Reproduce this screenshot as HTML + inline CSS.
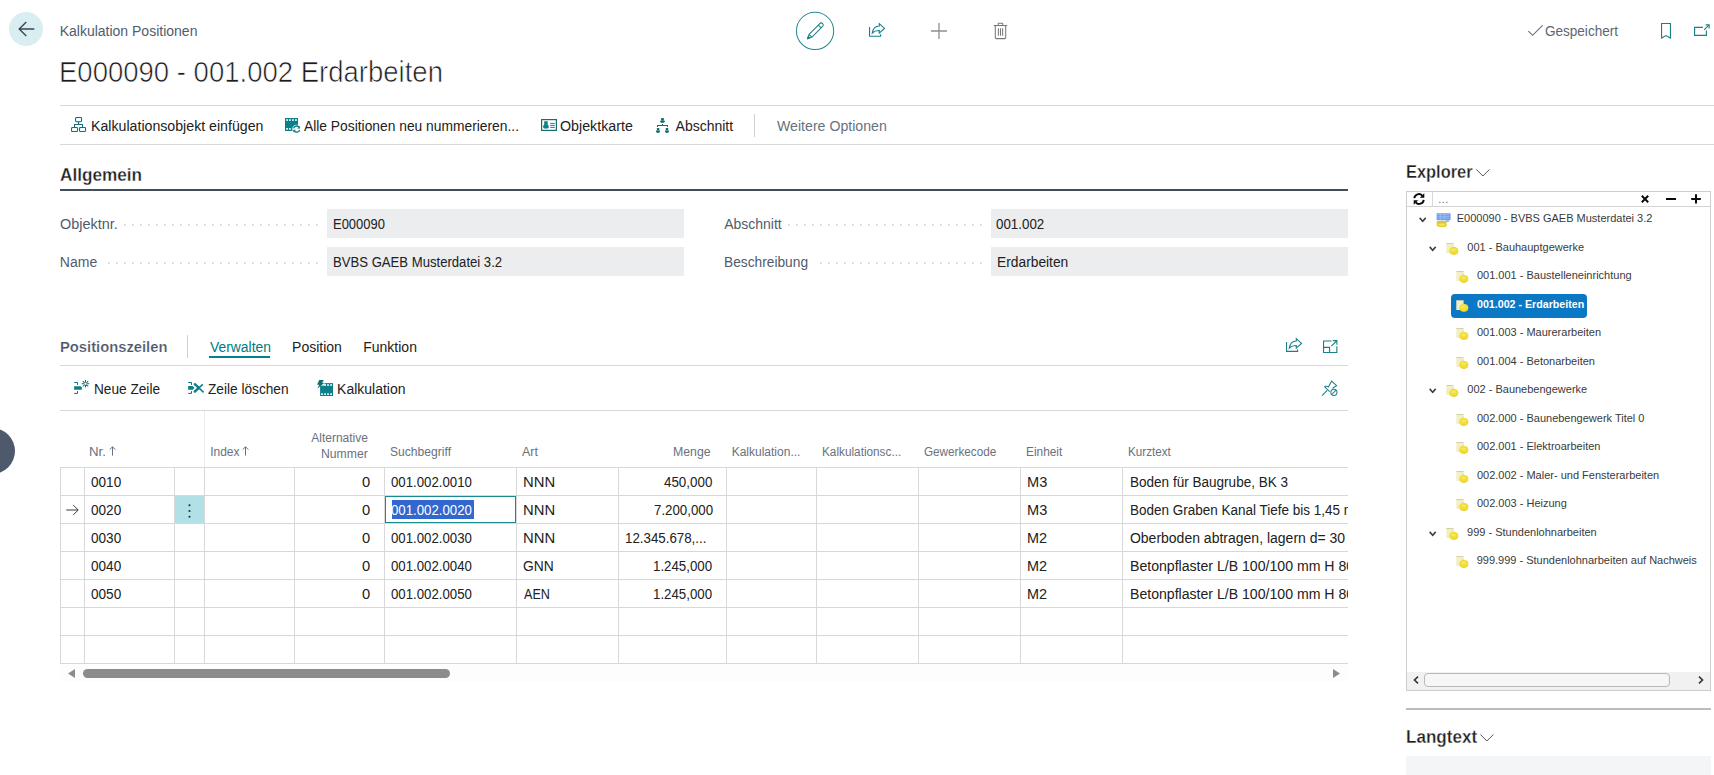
<!DOCTYPE html>
<html lang="de">
<head>
<meta charset="utf-8">
<title>Kalkulation Positionen - E000090 - 001.002 Erdarbeiten</title>
<style>
html,body{margin:0;padding:0;background:#fff;}
body{width:1714px;height:775px;position:relative;overflow:hidden;font-family:"Liberation Sans",sans-serif;}
.t{position:absolute;white-space:pre;transform-origin:0 50%;font-family:"Liberation Sans",sans-serif;}
.a{position:absolute;}
.hl{position:absolute;height:1px;background:#d6d8db;}
.vl{position:absolute;width:1px;background:#d9d9d9;}
.fld{position:absolute;height:28.7px;background:#ebedee;}
.dots{position:absolute;height:2px;background-image:radial-gradient(circle at 1px 1px,#d3d5d8 0.55px,rgba(211,213,216,0) 1.2px);background-size:8px 2px;background-repeat:repeat-x;}
svg{position:absolute;overflow:visible;}
</style>
</head>
<body>

<!-- ===== header ===== -->
<div class="a" style="left:9.1px;top:11.9px;width:34.1px;height:34.1px;border-radius:50%;background:#d8eef0;"></div>
<svg style="left:17.5px;top:21px" width="17" height="16" viewBox="0 0 17 16"><path d="M16.3 8H1.2M8.3 1.1L1.2 8l7.1 6.9" fill="none" stroke="#3b464f" stroke-width="1.35"/></svg>

<!-- page separator lines -->
<div class="hl" style="left:60px;top:105px;width:1654px;"></div>
<div class="hl" style="left:60px;top:144px;width:1654px;"></div>
<div class="a" style="left:754px;top:114px;width:1px;height:23px;background:#cfd1d4;"></div>

<!-- ===== Allgemein ===== -->
<div class="a" style="left:60px;top:189px;width:1288px;height:2px;background:#434e5c;"></div>
<div class="fld" style="left:327px;top:209px;width:357px;"></div>
<div class="fld" style="left:327px;top:247.1px;width:357px;"></div>
<div class="fld" style="left:991px;top:209px;width:357px;"></div>
<div class="fld" style="left:991px;top:247.1px;width:357px;"></div>
<div class="dots" style="left:124px;top:224px;width:196px;"></div>
<div class="dots" style="left:108px;top:262px;width:212px;"></div>
<div class="dots" style="left:788px;top:224px;width:196px;"></div>
<div class="dots" style="left:820px;top:262px;width:164px;"></div>

<!-- ===== Positionszeilen ===== -->
<div class="a" style="left:187px;top:335px;width:1px;height:23px;background:#cfd1d4;"></div>
<div class="a" style="left:209px;top:356px;width:61px;height:2px;background:#00838c;"></div>
<div class="hl" style="left:60px;top:365px;width:1288px;"></div>
<div class="hl" style="left:60px;top:410px;width:1288px;"></div>

<!-- table grid -->
<div id="grid">
<div class="a" style="left:204px;top:411px;width:1px;height:56px;background:#ececec;"></div>
<div class="a" style="left:175px;top:496px;width:29px;height:27px;background:#b1e1e7;"></div>
<div class="a" style="left:60px;top:467px;width:1288px;height:1px;background:#d7d7d7;"></div>
<div class="a" style="left:60px;top:495px;width:1288px;height:1px;background:#d7d7d7;"></div>
<div class="a" style="left:60px;top:523px;width:1288px;height:1px;background:#d7d7d7;"></div>
<div class="a" style="left:60px;top:551px;width:1288px;height:1px;background:#d7d7d7;"></div>
<div class="a" style="left:60px;top:579px;width:1288px;height:1px;background:#d7d7d7;"></div>
<div class="a" style="left:60px;top:607px;width:1288px;height:1px;background:#d7d7d7;"></div>
<div class="a" style="left:60px;top:635px;width:1288px;height:1px;background:#d7d7d7;"></div>
<div class="a" style="left:60px;top:663px;width:1288px;height:1px;background:#d7d7d7;"></div>
<div class="vl" style="left:60px;top:467px;height:197px;"></div>
<div class="vl" style="left:84px;top:467px;height:197px;"></div>
<div class="vl" style="left:174px;top:467px;height:197px;"></div>
<div class="vl" style="left:204px;top:467px;height:197px;"></div>
<div class="vl" style="left:294px;top:467px;height:197px;"></div>
<div class="vl" style="left:384px;top:467px;height:197px;"></div>
<div class="vl" style="left:516px;top:467px;height:197px;"></div>
<div class="vl" style="left:618px;top:467px;height:197px;"></div>
<div class="vl" style="left:726px;top:467px;height:197px;"></div>
<div class="vl" style="left:816px;top:467px;height:197px;"></div>
<div class="vl" style="left:918px;top:467px;height:197px;"></div>
<div class="vl" style="left:1020px;top:467px;height:197px;"></div>
<div class="vl" style="left:1122px;top:467px;height:197px;"></div>
<div class="a" style="left:385px;top:496px;width:131px;height:27px;box-sizing:border-box;border:1px solid #188b90;background:#fff;"></div>
<div class="a" style="left:392px;top:500px;width:82px;height:18.6px;background:#3367d0;"></div>
<div class="a" style="left:60px;top:665px;width:1288px;height:17px;background:#fdfdfd;"></div>
<div class="a" style="left:83px;top:669px;width:367px;height:9px;border-radius:5px;background:#8c8c8c;"></div>
<svg style="left:68px;top:669px" width="7" height="9" viewBox="0 0 7 9"><path d="M0 4.5L7 0v9z" fill="#8c8c8c"/></svg>
<svg style="left:1333px;top:669px" width="7" height="9" viewBox="0 0 7 9"><path d="M7 4.5L0 0v9z" fill="#8c8c8c"/></svg>
</div>

<!-- ===== right panel ===== -->
<div class="a" style="left:1406px;top:191px;width:305px;height:500px;border:1px solid #cdcdcd;box-sizing:border-box;"></div>
<div class="a" style="left:1407px;top:206px;width:303px;height:1px;background:#d4d4d4;"></div>
<div class="a" style="left:1432px;top:192px;width:1px;height:14px;background:#d9d9d9;"></div>
<div class="a" style="left:1451px;top:294px;width:136px;height:24px;border-radius:4px;background:#0a78c5;"></div>
<div class="a" style="left:1406px;top:708px;width:305px;height:2px;background:#b9bcc1;"></div>
<div class="a" style="left:1406px;top:756px;width:305px;height:19px;background:#f4f5f6;"></div>

<!-- ===== top centre icons ===== -->
<svg style="left:795px;top:11px" width="40" height="40" viewBox="0 0 40 40">
  <circle cx="20.05" cy="19.9" r="18.6" fill="none" stroke="#23898f" stroke-width="1.05"/>
  <g transform="translate(20 20.2) rotate(45)" fill="none" stroke="#1d7f86" stroke-width="1" stroke-linejoin="round">
    <path d="M-2 -8.8a2 2 0 0 1 4 0V6.4L0 10.6L-2 6.4Z"/>
    <path d="M-2 -6.6H2M-2 6.4H2"/>
    <path d="M-1.1 8.3L0 10.6L1.1 8.3Z" fill="#1d7f86"/>
  </g>
</svg>
<!-- share -->
<svg style="left:869px;top:23px" width="17" height="15" viewBox="0 0 17 15" fill="none" stroke="#1a7f87" stroke-width="1.1" stroke-linejoin="miter">
  <path d="M0.55 4V13.2H11.6V11.2"/>
  <path d="M10.3 0.7L15.5 5.4L10.3 10.1V7.5C7.2 7.4 4.9 8.3 3.3 10C3.8 6 6.4 3.2 10.3 3Z"/>
</svg>
<!-- plus -->
<svg style="left:931px;top:23px" width="16" height="16" viewBox="0 0 16 16"><path d="M8 0V16M0 8H16" stroke="#8c8e91" stroke-width="1.3"/></svg>
<!-- trash -->
<svg style="left:993px;top:22px" width="15" height="18" viewBox="0 0 15 18" fill="none" stroke="#77797c" stroke-width="1.05">
  <path d="M0.8 3.55H14.2"/>
  <path d="M5.2 3.5V1.8a0.5 0.5 0 0 1 0.5 -0.5h3.5a0.5 0.5 0 0 1 0.5 0.5V3.5"/>
  <path d="M2.3 3.6V15.6a1 1 0 0 0 1 1h8.4a1 1 0 0 0 1 -1V3.6"/>
  <path d="M5.4 6.2V13.7M7.5 6.2V13.7M9.6 6.2V13.7"/>
</svg>
<!-- check mark (Gespeichert) -->
<svg style="left:1528px;top:25px" width="15" height="11" viewBox="0 0 15 11"><path d="M0.4 6.2L4.6 10.3L14.6 0.4" fill="none" stroke="#6b6f75" stroke-width="1.15"/></svg>
<!-- bookmark -->
<svg style="left:1661px;top:23px" width="10" height="16" viewBox="0 0 10 16"><path d="M0.55 0.55H9.45V15L5 12.6L0.55 15Z" fill="none" stroke="#1f7d85" stroke-width="1.1"/></svg>
<!-- pop out -->
<svg style="left:1694px;top:24px" width="16" height="12" viewBox="0 0 16 12" fill="none" stroke="#1f7d85" stroke-width="1.15">
  <path d="M9 3.4H0.6V11.3H12.4V6.4"/>
  <path d="M10.2 5.8L14.8 1.2"/>
  <path d="M11.6 0.9H15.1V4.4" />
</svg>

<!-- ===== action bar icons ===== -->
<!-- org chart -->
<svg style="left:71px;top:117px" width="15" height="15" viewBox="0 0 15 15" fill="none" stroke="#136c76" stroke-width="1.05">
  <rect x="4.55" y="0.55" width="6" height="4.1" rx="0.9" fill="#edffff"/>
  <path d="M7.55 4.7V7.5M3.55 10.4V7.5H11.55V10.4"/>
  <rect x="0.55" y="10.45" width="6" height="4.1" rx="0.9" fill="#edffff"/>
  <rect x="8.55" y="10.45" width="6" height="4.1" rx="0.9" fill="#edffff"/>
</svg>
<!-- film + refresh -->
<svg style="left:285px;top:118px" width="16" height="16" viewBox="0 0 16 16">
  <rect x="0" y="0" width="13" height="13" fill="#0c7f88"/>
  <g fill="#eaffff"><rect x="1.2" y="1.2" width="1.7" height="1.7"/><rect x="4.1" y="1.2" width="1.7" height="1.7"/><rect x="7.1" y="1.2" width="1.7" height="1.7"/><rect x="10.1" y="1.2" width="1.7" height="1.7"/><rect x="1.2" y="10" width="1.7" height="1.7"/><rect x="4.1" y="10" width="1.7" height="1.7"/></g>
  <circle cx="11.6" cy="11.1" r="4.4" fill="#fff"/>
  <g fill="none" stroke="#0c6f78" stroke-width="1.3"><path d="M8.6 10.4a3.1 3.1 0 0 1 5.2 -1.5"/><path d="M14.6 11.8a3.1 3.1 0 0 1 -5.2 1.5"/></g>
  <path d="M14.9 7.7V10.4H12.2Z M8.3 14.5V11.8H11Z" fill="#0c6f78"/>
</svg>
<!-- card -->
<svg style="left:541px;top:119px" width="16" height="12" viewBox="0 0 16 12">
  <rect x="0.6" y="0.6" width="14.8" height="10.8" fill="none" stroke="#136c76" stroke-width="1.2"/>
  <path d="M3.2 2.2H6.7V6.2H7.7V8.8L6.7 9.6H3.2L2.2 8.8V6.2H3.2Z" fill="#0c7f88"/>
  <path d="M9.2 4.4H13.8M9.2 6.4H13.8M9.2 8.4H13.8" stroke="#136c76" stroke-width="0.9"/>
</svg>
<!-- people hierarchy -->
<svg style="left:655px;top:117px" width="15" height="17" viewBox="0 0 15 17" fill="#136c76">
  <rect x="6.1" y="0.9" width="2.8" height="2.9" rx="0.5"/>
  <path d="M5 3.8H10C10 5.2 9 6 7.5 6S5 5.2 5 3.8Z"/>
  <path d="M2 10V8H7V7.1H8V8H13V10H12V9H3V10Z"/>
  <rect x="1.9" y="11" width="2.4" height="2.5" rx="0.4"/>
  <path d="M0.9 13.5H5.1C5.1 15.2 4.2 16 3 16S0.9 15.2 0.9 13.5Z"/>
  <rect x="10.8" y="11" width="2.4" height="2.5" rx="0.4"/>
  <path d="M9.9 13.5H14.1C14.1 15.2 13.2 16 12 16S9.9 15.2 9.9 13.5Z"/>
</svg>

<!-- ===== Positionszeilen icons ===== -->
<!-- share small -->
<svg style="left:1286px;top:338px" width="17" height="15" viewBox="0 0 17 15" fill="none" stroke="#1a7f87" stroke-width="1.1">
  <path d="M0.55 4V13.4H11.6V11.4"/>
  <path d="M10.3 0.7L15.5 5.4L10.3 10.1V7.5C7.2 7.4 4.9 8.3 3.3 10C3.8 6 6.4 3.2 10.3 3Z"/>
</svg>
<!-- expand -->
<svg style="left:1323px;top:339.5px" width="15" height="13" viewBox="0 0 15 13" fill="none" stroke="#1a7f87" stroke-width="1.1">
  <path d="M8.5 0.95H0.55V12.45H13.85V6.2"/>
  <path d="M0.6 7.4H6.6V12.4"/>
  <path d="M8.3 6.2L13.7 0.8M9.8 0.6H13.9V4.7"/>
</svg>
<!-- pin with stop -->
<svg style="left:1321px;top:380px" width="18" height="17" viewBox="0 0 18 17" fill="none" stroke="#1a7f87" stroke-width="1.05">
  <path d="M1 15.6L6.2 10.4"/>
  <path d="M3.5 6.6C5.2 6.1 6.5 6.3 7.4 6.9L10.6 1L15.6 5.6L11.5 8.2"/>
  <path d="M3.5 6.6L8.6 11.6"/>
  <circle cx="12.9" cy="12.3" r="3.1" fill="#fff"/>
  <path d="M10.8 14.5L15 10.1"/>
</svg>
<!-- new line -->
<svg style="left:74px;top:380px" width="17" height="15" viewBox="0 0 17 15">
  <path d="M0.2 2.5H3.5V4.9M0.2 13.4H3.5V11.2" fill="none" stroke="#0c6f78" stroke-width="1"/>
  <path d="M0.1 6.2H6.6L7.9 7.3V9.8H0.1Z" fill="#0c7f88"/>
  <g stroke="#136c76" stroke-width="1.05"><path d="M11.5 0V7.6M7.7 3.8H15.3M8.8 1.1L14.2 6.5M14.2 1.1L8.8 6.5"/></g>
  <circle cx="11.5" cy="3.8" r="1.2" fill="#d6f8fb"/>
</svg>
<!-- delete line -->
<svg style="left:188px;top:380px" width="17" height="15" viewBox="0 0 17 15">
  <path d="M0.2 2.5H3.5V4.9M0.2 13.4H3.5V11.2" fill="none" stroke="#0c6f78" stroke-width="1"/>
  <path d="M0.1 6.1H4.6L6.6 8L4.6 9.8H0.1Z" fill="#0c7f88"/>
  <path d="M6.8 4.2L10.6 7.6L15.6 12.4" fill="none" stroke="#0c7f88" stroke-width="1.5"/>
  <path d="M6.8 4.2L10.4 7.4" fill="none" stroke="#0c7f88" stroke-width="2.4" stroke-linecap="round"/>
  <path d="M14.8 4.4L6.6 11.8" fill="none" stroke="#0c7f88" stroke-width="1.5"/>
  <path d="M10 8.6L6.8 11.6" fill="none" stroke="#0c7f88" stroke-width="2.4" stroke-linecap="round"/>
</svg>
<!-- kalkulation (film + bolt) -->
<svg style="left:317px;top:380px" width="17" height="17" viewBox="0 0 17 17">
  <rect x="3.1" y="3.1" width="12.9" height="12.9" fill="#0c7f88"/>
  <path d="M2 0H7L5 2.6H6.9L3 7.2V3.1H1.2L0 8.8L1.5 5.2H-0.2Z" fill="none"/>
  <path d="M3.1 3.1H7.6V5.6H3.1Z" fill="#fff"/>
  <path d="M2.2 0.1H6.9L5 2.7H7.4L0.2 8.8L2.2 4.8H0.1Z" fill="#0c6f78"/>
  <g fill="#eaffff"><rect x="7.3" y="4.2" width="1.7" height="1.7"/><rect x="10.2" y="4.2" width="1.7" height="1.7"/><rect x="13.2" y="4.2" width="1.7" height="1.7"/><rect x="4.2" y="13.3" width="1.7" height="1.7"/><rect x="7.2" y="13.3" width="1.7" height="1.7"/><rect x="10.2" y="13.3" width="1.7" height="1.7"/><rect x="13.2" y="13.3" width="1.7" height="1.7"/></g>
</svg>

<!-- ===== grid icons ===== -->
<!-- sort arrows -->
<svg style="left:109px;top:446px" width="7" height="10" viewBox="0 0 7 10"><path d="M3.5 9.6V0.9M0.7 3.6L3.5 0.8L6.3 3.6" fill="none" stroke="#69717d" stroke-width="1"/></svg>
<svg style="left:242px;top:446px" width="7" height="10" viewBox="0 0 7 10"><path d="M3.5 9.6V0.9M0.7 3.6L3.5 0.8L6.3 3.6" fill="none" stroke="#69717d" stroke-width="1"/></svg>
<!-- current row arrow -->
<svg style="left:66px;top:504px" width="13" height="12" viewBox="0 0 13 12"><path d="M0.3 6H12M7.4 1.2L12.2 6L7.4 10.8" fill="none" stroke="#3a3a3a" stroke-width="1"/></svg>
<!-- row menu dots -->
<svg style="left:188px;top:503px" width="3" height="16" viewBox="0 0 3 16" fill="#2a2a2a"><circle cx="1.5" cy="2.2" r="1.05"/><circle cx="1.5" cy="8" r="1.05"/><circle cx="1.5" cy="13.8" r="1.05"/></svg>

<!-- left edge dark handle -->
<div class="a" style="left:-31.6px;top:427.55px;width:46.5px;height:46.5px;border-radius:50%;background:#4e596b;"></div>

<!-- ===== right panel icons ===== -->
<!-- explorer chevron -->
<svg style="left:1476.3px;top:168.8px" width="14" height="8" viewBox="0 0 14 8"><path d="M0.4 0.5L6.9 7L13.4 0.5" fill="none" stroke="#555" stroke-width="1"/></svg>
<!-- langtext chevron -->
<svg style="left:1480px;top:733.8px" width="14" height="8" viewBox="0 0 14 8"><path d="M0.4 0.5L6.9 7L13.4 0.5" fill="none" stroke="#555" stroke-width="1"/></svg>
<!-- refresh -->
<svg style="left:1413px;top:193px" width="12" height="12" viewBox="0 0 12 12">
  <g fill="none" stroke="#0a0a0a" stroke-width="1.9"><path d="M1.3 5.2A4.6 4.6 0 0 1 9.3 2.6"/><path d="M10.7 6.8A4.6 4.6 0 0 1 2.7 9.4"/></g>
  <path d="M11.3 0.2V4.7H6.8Z M0.7 11.8V7.3H5.2Z" fill="#0a0a0a"/>
</svg>
<!-- x - + -->
<svg style="left:1641px;top:195px" width="8" height="8" viewBox="0 0 8 8"><path d="M0.8 0.8L7.2 7.2M7.2 0.8L0.8 7.2" stroke="#0a0a0a" stroke-width="2"/></svg>
<svg style="left:1666px;top:197.6px" width="10" height="2" viewBox="0 0 10 2"><rect width="10" height="2" fill="#0a0a0a"/></svg>
<svg style="left:1691px;top:194px" width="10" height="10" viewBox="0 0 10 10"><path d="M5 0.2V9.6M0.2 4.9H9.8" stroke="#0a0a0a" stroke-width="2"/></svg>
<!-- tree scrollbar -->
<div class="a" style="left:1407px;top:672px;width:303px;height:18px;background:#f1f1f1;"></div>
<div class="a" style="left:1424px;top:673px;width:246px;height:14px;box-sizing:border-box;border:1px solid #b9b9b9;border-radius:4px;background:#f6f6f6;"></div>
<svg style="left:1413px;top:676px" width="6" height="8" viewBox="0 0 6 8"><path d="M5 0.7L1.5 4L5 7.3" fill="none" stroke="#333" stroke-width="1.6"/></svg>
<svg style="left:1698px;top:676px" width="6" height="8" viewBox="0 0 6 8"><path d="M1 0.7L4.5 4L1 7.3" fill="none" stroke="#333" stroke-width="1.6"/></svg>
<svg style="left:1418.9px;top:216.9px" width="7.4" height="6" viewBox="0 0 7.4 6"><path d="M0.7 0.9L3.7 4.2L6.7 0.9" fill="none" stroke="#404040" stroke-width="1.6"/></svg>
<svg style="left:1435.5px;top:212.8px" width="15" height="15" viewBox="0 0 15 15"><rect x="0.6" y="0.2" width="14" height="7" rx="0.6" fill="#6f9eea"/><path d="M1.6 1.6H13.6M1.6 3.4H13.6M1.6 5.2H13.6M4.6 0.8V6.4M8.6 0.8V6.4" stroke="#9fc0f5" stroke-width="0.7"/><path d="M9 7.2H13V9H10Z" fill="#9db6e0"/><ellipse cx="5.6" cy="9.6" rx="5.2" ry="1.9" fill="#d8c048"/><ellipse cx="5.8" cy="12" rx="5.3" ry="2.1" fill="#ecd02c"/><ellipse cx="5.8" cy="11.4" rx="3" ry="1" fill="#f7e566"/></svg>
<svg style="left:1428.9px;top:246.0px" width="7.4" height="6" viewBox="0 0 7.4 6"><path d="M0.7 0.9L3.7 4.2L6.7 0.9" fill="none" stroke="#404040" stroke-width="1.6"/></svg>
<svg style="left:1446.2px;top:242.6px" width="13" height="12.5" viewBox="0 0 13 12.5"><path d="M0.3 0.3H7.5V10H0.3Z" fill="#f2eec6"/><path d="M0.3 0.5H7.5" stroke="#c6c18c" stroke-width="0.7"/><path d="M7.5 1.2L4 9.9H7.5Z" fill="#ddd6a0"/><ellipse cx="7.9" cy="8.1" rx="4.4" ry="3.8" fill="#e6cc2a"/><ellipse cx="7.9" cy="7.4" rx="4.3" ry="3.5" fill="#f1dd33"/><ellipse cx="7.6" cy="6.8" rx="2.4" ry="1.5" fill="#f6e858"/></svg>
<svg style="left:1456.1px;top:270.9px" width="13" height="12.5" viewBox="0 0 13 12.5"><path d="M0.3 0.3H7.5V10H0.3Z" fill="#f2eec6"/><path d="M0.3 0.5H7.5" stroke="#c6c18c" stroke-width="0.7"/><path d="M7.5 1.2L4 9.9H7.5Z" fill="#ddd6a0"/><ellipse cx="7.9" cy="8.1" rx="4.4" ry="3.8" fill="#e6cc2a"/><ellipse cx="7.9" cy="7.4" rx="4.3" ry="3.5" fill="#f1dd33"/><ellipse cx="7.6" cy="6.8" rx="2.4" ry="1.5" fill="#f6e858"/></svg>
<svg style="left:1456.1px;top:299.8px" width="13" height="12.5" viewBox="0 0 13 12.5"><path d="M0.3 0.3H7.5V10H0.3Z" fill="#f2eec6"/><path d="M0.3 0.5H7.5" stroke="#c6c18c" stroke-width="0.7"/><path d="M7.5 1.2L4 9.9H7.5Z" fill="#ddd6a0"/><ellipse cx="7.9" cy="8.1" rx="4.4" ry="3.8" fill="#e6cc2a"/><ellipse cx="7.9" cy="7.4" rx="4.3" ry="3.5" fill="#f1dd33"/><ellipse cx="7.6" cy="6.8" rx="2.4" ry="1.5" fill="#f6e858"/></svg>
<svg style="left:1456.1px;top:327.8px" width="13" height="12.5" viewBox="0 0 13 12.5"><path d="M0.3 0.3H7.5V10H0.3Z" fill="#f2eec6"/><path d="M0.3 0.5H7.5" stroke="#c6c18c" stroke-width="0.7"/><path d="M7.5 1.2L4 9.9H7.5Z" fill="#ddd6a0"/><ellipse cx="7.9" cy="8.1" rx="4.4" ry="3.8" fill="#e6cc2a"/><ellipse cx="7.9" cy="7.4" rx="4.3" ry="3.5" fill="#f1dd33"/><ellipse cx="7.6" cy="6.8" rx="2.4" ry="1.5" fill="#f6e858"/></svg>
<svg style="left:1456.1px;top:356.6px" width="13" height="12.5" viewBox="0 0 13 12.5"><path d="M0.3 0.3H7.5V10H0.3Z" fill="#f2eec6"/><path d="M0.3 0.5H7.5" stroke="#c6c18c" stroke-width="0.7"/><path d="M7.5 1.2L4 9.9H7.5Z" fill="#ddd6a0"/><ellipse cx="7.9" cy="8.1" rx="4.4" ry="3.8" fill="#e6cc2a"/><ellipse cx="7.9" cy="7.4" rx="4.3" ry="3.5" fill="#f1dd33"/><ellipse cx="7.6" cy="6.8" rx="2.4" ry="1.5" fill="#f6e858"/></svg>
<svg style="left:1428.9px;top:388.4px" width="7.4" height="6" viewBox="0 0 7.4 6"><path d="M0.7 0.9L3.7 4.2L6.7 0.9" fill="none" stroke="#404040" stroke-width="1.6"/></svg>
<svg style="left:1446.2px;top:385.0px" width="13" height="12.5" viewBox="0 0 13 12.5"><path d="M0.3 0.3H7.5V10H0.3Z" fill="#f2eec6"/><path d="M0.3 0.5H7.5" stroke="#c6c18c" stroke-width="0.7"/><path d="M7.5 1.2L4 9.9H7.5Z" fill="#ddd6a0"/><ellipse cx="7.9" cy="8.1" rx="4.4" ry="3.8" fill="#e6cc2a"/><ellipse cx="7.9" cy="7.4" rx="4.3" ry="3.5" fill="#f1dd33"/><ellipse cx="7.6" cy="6.8" rx="2.4" ry="1.5" fill="#f6e858"/></svg>
<svg style="left:1456.1px;top:413.6px" width="13" height="12.5" viewBox="0 0 13 12.5"><path d="M0.3 0.3H7.5V10H0.3Z" fill="#f2eec6"/><path d="M0.3 0.5H7.5" stroke="#c6c18c" stroke-width="0.7"/><path d="M7.5 1.2L4 9.9H7.5Z" fill="#ddd6a0"/><ellipse cx="7.9" cy="8.1" rx="4.4" ry="3.8" fill="#e6cc2a"/><ellipse cx="7.9" cy="7.4" rx="4.3" ry="3.5" fill="#f1dd33"/><ellipse cx="7.6" cy="6.8" rx="2.4" ry="1.5" fill="#f6e858"/></svg>
<svg style="left:1456.1px;top:442.0px" width="13" height="12.5" viewBox="0 0 13 12.5"><path d="M0.3 0.3H7.5V10H0.3Z" fill="#f2eec6"/><path d="M0.3 0.5H7.5" stroke="#c6c18c" stroke-width="0.7"/><path d="M7.5 1.2L4 9.9H7.5Z" fill="#ddd6a0"/><ellipse cx="7.9" cy="8.1" rx="4.4" ry="3.8" fill="#e6cc2a"/><ellipse cx="7.9" cy="7.4" rx="4.3" ry="3.5" fill="#f1dd33"/><ellipse cx="7.6" cy="6.8" rx="2.4" ry="1.5" fill="#f6e858"/></svg>
<svg style="left:1456.1px;top:470.6px" width="13" height="12.5" viewBox="0 0 13 12.5"><path d="M0.3 0.3H7.5V10H0.3Z" fill="#f2eec6"/><path d="M0.3 0.5H7.5" stroke="#c6c18c" stroke-width="0.7"/><path d="M7.5 1.2L4 9.9H7.5Z" fill="#ddd6a0"/><ellipse cx="7.9" cy="8.1" rx="4.4" ry="3.8" fill="#e6cc2a"/><ellipse cx="7.9" cy="7.4" rx="4.3" ry="3.5" fill="#f1dd33"/><ellipse cx="7.6" cy="6.8" rx="2.4" ry="1.5" fill="#f6e858"/></svg>
<svg style="left:1456.1px;top:499.0px" width="13" height="12.5" viewBox="0 0 13 12.5"><path d="M0.3 0.3H7.5V10H0.3Z" fill="#f2eec6"/><path d="M0.3 0.5H7.5" stroke="#c6c18c" stroke-width="0.7"/><path d="M7.5 1.2L4 9.9H7.5Z" fill="#ddd6a0"/><ellipse cx="7.9" cy="8.1" rx="4.4" ry="3.8" fill="#e6cc2a"/><ellipse cx="7.9" cy="7.4" rx="4.3" ry="3.5" fill="#f1dd33"/><ellipse cx="7.6" cy="6.8" rx="2.4" ry="1.5" fill="#f6e858"/></svg>
<svg style="left:1428.9px;top:531.1px" width="7.4" height="6" viewBox="0 0 7.4 6"><path d="M0.7 0.9L3.7 4.2L6.7 0.9" fill="none" stroke="#404040" stroke-width="1.6"/></svg>
<svg style="left:1446.2px;top:527.7px" width="13" height="12.5" viewBox="0 0 13 12.5"><path d="M0.3 0.3H7.5V10H0.3Z" fill="#f2eec6"/><path d="M0.3 0.5H7.5" stroke="#c6c18c" stroke-width="0.7"/><path d="M7.5 1.2L4 9.9H7.5Z" fill="#ddd6a0"/><ellipse cx="7.9" cy="8.1" rx="4.4" ry="3.8" fill="#e6cc2a"/><ellipse cx="7.9" cy="7.4" rx="4.3" ry="3.5" fill="#f1dd33"/><ellipse cx="7.6" cy="6.8" rx="2.4" ry="1.5" fill="#f6e858"/></svg>
<svg style="left:1456.1px;top:555.8px" width="13" height="12.5" viewBox="0 0 13 12.5"><path d="M0.3 0.3H7.5V10H0.3Z" fill="#f2eec6"/><path d="M0.3 0.5H7.5" stroke="#c6c18c" stroke-width="0.7"/><path d="M7.5 1.2L4 9.9H7.5Z" fill="#ddd6a0"/><ellipse cx="7.9" cy="8.1" rx="4.4" ry="3.8" fill="#e6cc2a"/><ellipse cx="7.9" cy="7.4" rx="4.3" ry="3.5" fill="#f1dd33"/><ellipse cx="7.6" cy="6.8" rx="2.4" ry="1.5" fill="#f6e858"/></svg>


<span class="t" style="left:59.67px;top:24.15px;font-size:14px;line-height:14px;color:#505c6d;transform:scaleX(1.0000);">Kalkulation Positionen</span>
<span class="t" style="left:59.49px;top:57.79px;font-size:28.6px;line-height:28.6px;color:#1c1c1c;transform:scaleX(0.9622);-webkit-text-stroke:0.62px #fff;">E000090 - 001.002 Erdarbeiten</span>
<span class="t" style="left:1544.85px;top:24.15px;font-size:14px;line-height:14px;color:#5c6673;transform:scaleX(0.9667);">Gespeichert</span>
<span class="t" style="left:90.64px;top:119.45px;font-size:14px;line-height:14px;color:#212121;transform:scaleX(1.0115);">Kalkulationsobjekt einfügen</span>
<span class="t" style="left:304.19px;top:119.45px;font-size:14px;line-height:14px;color:#212121;transform:scaleX(0.9866);">Alle Positionen neu nummerieren...</span>
<span class="t" style="left:560.45px;top:119.45px;font-size:14px;line-height:14px;color:#212121;transform:scaleX(1.0169);">Objektkarte</span>
<span class="t" style="left:675.56px;top:119.45px;font-size:14px;line-height:14px;color:#212121;transform:scaleX(1.0000);">Abschnitt</span>
<span class="t" style="left:776.87px;top:119.45px;font-size:14px;line-height:14px;color:#69717d;transform:scaleX(1.0099);">Weitere Optionen</span>
<span class="t" style="left:60.35px;top:166.65px;font-size:17.9px;line-height:17.9px;color:#1e1e1e;transform:scaleX(0.9605);font-weight:700;-webkit-text-stroke:0.3px #fff;">Allgemein</span>
<span class="t" style="left:59.66px;top:217.15px;font-size:14px;line-height:14px;color:#505c6d;transform:scaleX(1.0320);">Objektnr.</span>
<span class="t" style="left:59.84px;top:255.15px;font-size:14px;line-height:14px;color:#505c6d;transform:scaleX(1.0000);">Name</span>
<span class="t" style="left:724.16px;top:217.15px;font-size:14px;line-height:14px;color:#505c6d;transform:scaleX(1.0000);">Abschnitt</span>
<span class="t" style="left:723.95px;top:255.15px;font-size:14px;line-height:14px;color:#505c6d;transform:scaleX(0.9816);">Beschreibung</span>
<span class="t" style="left:332.56px;top:217.15px;font-size:14px;line-height:14px;color:#212121;transform:scaleX(0.9248);">E000090</span>
<span class="t" style="left:332.56px;top:255.15px;font-size:14px;line-height:14px;color:#212121;transform:scaleX(0.9367);">BVBS GAEB Musterdatei 3.2</span>
<span class="t" style="left:996.35px;top:217.15px;font-size:14px;line-height:14px;color:#212121;transform:scaleX(0.9531);">001.002</span>
<span class="t" style="left:996.55px;top:255.15px;font-size:14px;line-height:14px;color:#212121;transform:scaleX(0.9850);">Erdarbeiten</span>
<span class="t" style="left:60.07px;top:338.88px;font-size:15.5px;line-height:15.5px;color:#4a5669;transform:scaleX(0.9520);font-weight:700;-webkit-text-stroke:0.22px #fff;">Positionszeilen</span>
<span class="t" style="left:209.96px;top:340.15px;font-size:14px;line-height:14px;color:#007b82;transform:scaleX(0.9910);">Verwalten</span>
<span class="t" style="left:292.05px;top:340.15px;font-size:14px;line-height:14px;color:#212121;transform:scaleX(1.0000);">Position</span>
<span class="t" style="left:363.24px;top:340.15px;font-size:14px;line-height:14px;color:#212121;transform:scaleX(1.0000);">Funktion</span>
<span class="t" style="left:94.34px;top:382.15px;font-size:14px;line-height:14px;color:#212121;transform:scaleX(0.9752);">Neue Zeile</span>
<span class="t" style="left:208.40px;top:382.15px;font-size:14px;line-height:14px;color:#212121;transform:scaleX(0.9764);">Zeile löschen</span>
<span class="t" style="left:337.07px;top:382.15px;font-size:14px;line-height:14px;color:#212121;transform:scaleX(1.0000);">Kalkulation</span>
<span class="t" style="left:89.28px;top:445.64px;font-size:12px;line-height:12px;color:#69717d;transform:scaleX(1.1010);">Nr.</span>
<span class="t" style="left:210.13px;top:445.64px;font-size:12px;line-height:12px;color:#69717d;transform:scaleX(1.0000);">Index</span>
<span class="t" style="left:311.28px;top:431.84px;font-size:12px;line-height:12px;color:#69717d;transform:scaleX(1.0000);">Alternative</span>
<span class="t" style="left:321.08px;top:447.64px;font-size:12px;line-height:12px;color:#69717d;transform:scaleX(1.0168);">Nummer</span>
<span class="t" style="left:390.19px;top:445.64px;font-size:12px;line-height:12px;color:#69717d;transform:scaleX(1.0083);">Suchbegriff</span>
<span class="t" style="left:521.65px;top:445.64px;font-size:12px;line-height:12px;color:#69717d;transform:scaleX(1.0354);">Art</span>
<span class="t" style="left:672.88px;top:445.64px;font-size:12px;line-height:12px;color:#69717d;transform:scaleX(1.0234);">Menge</span>
<span class="t" style="left:731.68px;top:445.64px;font-size:12px;line-height:12px;color:#69717d;transform:scaleX(1.0000);">Kalkulation...</span>
<span class="t" style="left:821.88px;top:445.64px;font-size:12px;line-height:12px;color:#69717d;transform:scaleX(0.9814);">Kalkulationsc...</span>
<span class="t" style="left:923.89px;top:445.64px;font-size:12px;line-height:12px;color:#69717d;transform:scaleX(0.9757);">Gewerkecode</span>
<span class="t" style="left:1026.08px;top:445.64px;font-size:12px;line-height:12px;color:#69717d;transform:scaleX(0.9875);">Einheit</span>
<span class="t" style="left:1128.08px;top:445.64px;font-size:12px;line-height:12px;color:#69717d;transform:scaleX(0.9716);">Kurztext</span>
<span class="t" style="left:91.15px;top:475.15px;font-size:14px;line-height:14px;color:#212121;transform:scaleX(0.9687);">0010</span>
<span class="t" style="left:361.94px;top:475.15px;font-size:14px;line-height:14px;color:#212121;transform:scaleX(1.0494);">0</span>
<span class="t" style="left:391.32px;top:475.15px;font-size:14px;line-height:14px;color:#212121;transform:scaleX(0.9444);">001.002.0010</span>
<span class="t" style="left:523.06px;top:475.15px;font-size:14px;line-height:14px;color:#212121;transform:scaleX(1.0574);">NNN</span>
<span class="t" style="left:664.40px;top:475.15px;font-size:14px;line-height:14px;color:#212121;transform:scaleX(0.9546);">450,000</span>
<span class="t" style="left:1026.92px;top:475.15px;font-size:14px;line-height:14px;color:#212121;transform:scaleX(1.0415);">M3</span>
<div style="position:absolute;left:0;top:0;width:1348px;height:775px;overflow:hidden;pointer-events:none"><span class="t" style="left:1129.76px;top:475.15px;font-size:14px;line-height:14px;color:#212121;transform:scaleX(0.9671);">Boden für Baugrube, BK 3</span></div>
<span class="t" style="left:91.15px;top:503.15px;font-size:14px;line-height:14px;color:#212121;transform:scaleX(0.9687);">0020</span>
<span class="t" style="left:361.94px;top:503.15px;font-size:14px;line-height:14px;color:#212121;transform:scaleX(1.0494);">0</span>
<span class="t" style="left:391.32px;top:503.15px;font-size:14px;line-height:14px;color:#ffffff;transform:scaleX(0.9444);">001.002.0020</span>
<span class="t" style="left:523.06px;top:503.15px;font-size:14px;line-height:14px;color:#212121;transform:scaleX(1.0574);">NNN</span>
<span class="t" style="left:653.54px;top:503.15px;font-size:14px;line-height:14px;color:#212121;transform:scaleX(0.9495);">7.200,000</span>
<span class="t" style="left:1026.92px;top:503.15px;font-size:14px;line-height:14px;color:#212121;transform:scaleX(1.0415);">M3</span>
<div style="position:absolute;left:0;top:0;width:1348px;height:775px;overflow:hidden;pointer-events:none"><span class="t" style="left:1129.76px;top:503.15px;font-size:14px;line-height:14px;color:#212121;transform:scaleX(0.9632);">Boden Graben Kanal Tiefe bis 1,45 m</span></div>
<span class="t" style="left:91.15px;top:531.15px;font-size:14px;line-height:14px;color:#212121;transform:scaleX(0.9687);">0030</span>
<span class="t" style="left:361.94px;top:531.15px;font-size:14px;line-height:14px;color:#212121;transform:scaleX(1.0494);">0</span>
<span class="t" style="left:391.32px;top:531.15px;font-size:14px;line-height:14px;color:#212121;transform:scaleX(0.9444);">001.002.0030</span>
<span class="t" style="left:523.06px;top:531.15px;font-size:14px;line-height:14px;color:#212121;transform:scaleX(1.0574);">NNN</span>
<span class="t" style="left:624.76px;top:531.15px;font-size:14px;line-height:14px;color:#212121;transform:scaleX(0.9507);">12.345.678,...</span>
<span class="t" style="left:1026.92px;top:531.15px;font-size:14px;line-height:14px;color:#212121;transform:scaleX(1.0301);">M2</span>
<div style="position:absolute;left:0;top:0;width:1348px;height:775px;overflow:hidden;pointer-events:none"><span class="t" style="left:1129.93px;top:531.15px;font-size:14px;line-height:14px;color:#212121;transform:scaleX(1.0000);">Oberboden abtragen, lagern d= 30 cm</span></div>
<span class="t" style="left:91.15px;top:559.15px;font-size:14px;line-height:14px;color:#212121;transform:scaleX(0.9687);">0040</span>
<span class="t" style="left:361.94px;top:559.15px;font-size:14px;line-height:14px;color:#212121;transform:scaleX(1.0494);">0</span>
<span class="t" style="left:391.32px;top:559.15px;font-size:14px;line-height:14px;color:#212121;transform:scaleX(0.9444);">001.002.0040</span>
<span class="t" style="left:523.42px;top:559.15px;font-size:14px;line-height:14px;color:#212121;transform:scaleX(0.9893);">GNN</span>
<span class="t" style="left:652.96px;top:559.15px;font-size:14px;line-height:14px;color:#212121;transform:scaleX(0.9492);">1.245,000</span>
<span class="t" style="left:1026.92px;top:559.15px;font-size:14px;line-height:14px;color:#212121;transform:scaleX(1.0301);">M2</span>
<div style="position:absolute;left:0;top:0;width:1348px;height:775px;overflow:hidden;pointer-events:none"><span class="t" style="left:1129.64px;top:559.15px;font-size:14px;line-height:14px;color:#212121;transform:scaleX(1.0067);">Betonpflaster L/B 100/100 mm H 80 mm</span></div>
<span class="t" style="left:91.15px;top:587.15px;font-size:14px;line-height:14px;color:#212121;transform:scaleX(0.9687);">0050</span>
<span class="t" style="left:361.94px;top:587.15px;font-size:14px;line-height:14px;color:#212121;transform:scaleX(1.0494);">0</span>
<span class="t" style="left:391.32px;top:587.15px;font-size:14px;line-height:14px;color:#212121;transform:scaleX(0.9444);">001.002.0050</span>
<span class="t" style="left:523.97px;top:587.15px;font-size:14px;line-height:14px;color:#212121;transform:scaleX(0.8998);">AEN</span>
<span class="t" style="left:652.96px;top:587.15px;font-size:14px;line-height:14px;color:#212121;transform:scaleX(0.9492);">1.245,000</span>
<span class="t" style="left:1026.92px;top:587.15px;font-size:14px;line-height:14px;color:#212121;transform:scaleX(1.0301);">M2</span>
<div style="position:absolute;left:0;top:0;width:1348px;height:775px;overflow:hidden;pointer-events:none"><span class="t" style="left:1129.64px;top:587.15px;font-size:14px;line-height:14px;color:#212121;transform:scaleX(1.0067);">Betonpflaster L/B 100/100 mm H 80 mm</span></div>
<span class="t" style="left:1406.14px;top:163.90px;font-size:17.6px;line-height:17.6px;color:#1e1e1e;transform:scaleX(0.9322);font-weight:700;-webkit-text-stroke:0.3px #fff;">Explorer</span>
<span class="t" style="left:1405.90px;top:728.90px;font-size:17.6px;line-height:17.6px;color:#1e1e1e;transform:scaleX(0.9707);font-weight:700;-webkit-text-stroke:0.3px #fff;">Langtext</span>
<span class="t" style="left:1437.79px;top:194.53px;font-size:10px;line-height:10px;color:#808080;transform:scaleX(1.2780);">...</span>
<span class="t" style="left:1456.74px;top:212.69px;font-size:11px;line-height:11px;color:#3a3a3a;transform:scaleX(1.0000);">E000090 - BVBS GAEB Musterdatei 3.2</span>
<span class="t" style="left:1467.31px;top:242.29px;font-size:11px;line-height:11px;color:#3a3a3a;transform:scaleX(1.0000);">001 - Bauhauptgewerke</span>
<span class="t" style="left:1476.91px;top:269.59px;font-size:11px;line-height:11px;color:#3a3a3a;transform:scaleX(1.0000);">001.001 - Baustelleneinrichtung</span>
<span class="t" style="left:1477.06px;top:299.49px;font-size:11px;line-height:11px;color:#ffffff;transform:scaleX(0.9687);font-weight:700;">001.002 - Erdarbeiten</span>
<span class="t" style="left:1476.91px;top:327.49px;font-size:11px;line-height:11px;color:#3a3a3a;transform:scaleX(1.0000);">001.003 - Maurerarbeiten</span>
<span class="t" style="left:1476.91px;top:356.29px;font-size:11px;line-height:11px;color:#3a3a3a;transform:scaleX(1.0000);">001.004 - Betonarbeiten</span>
<span class="t" style="left:1467.31px;top:383.69px;font-size:11px;line-height:11px;color:#3a3a3a;transform:scaleX(1.0000);">002 - Baunebengewerke</span>
<span class="t" style="left:1476.91px;top:413.29px;font-size:11px;line-height:11px;color:#3a3a3a;transform:scaleX(1.0000);">002.000 - Baunebengewerk Titel 0</span>
<span class="t" style="left:1476.91px;top:440.69px;font-size:11px;line-height:11px;color:#3a3a3a;transform:scaleX(1.0000);">002.001 - Elektroarbeiten</span>
<span class="t" style="left:1476.91px;top:470.29px;font-size:11px;line-height:11px;color:#3a3a3a;transform:scaleX(1.0000);">002.002 - Maler- und Fensterarbeiten</span>
<span class="t" style="left:1476.91px;top:497.69px;font-size:11px;line-height:11px;color:#3a3a3a;transform:scaleX(1.0000);">002.003 - Heizung</span>
<span class="t" style="left:1467.06px;top:527.39px;font-size:11px;line-height:11px;color:#3a3a3a;transform:scaleX(1.0000);">999 - Stundenlohnarbeiten</span>
<span class="t" style="left:1476.66px;top:555.49px;font-size:11px;line-height:11px;color:#3a3a3a;transform:scaleX(1.0000);">999.999 - Stundenlohnarbeiten auf Nachweis</span>
</body>
</html>
